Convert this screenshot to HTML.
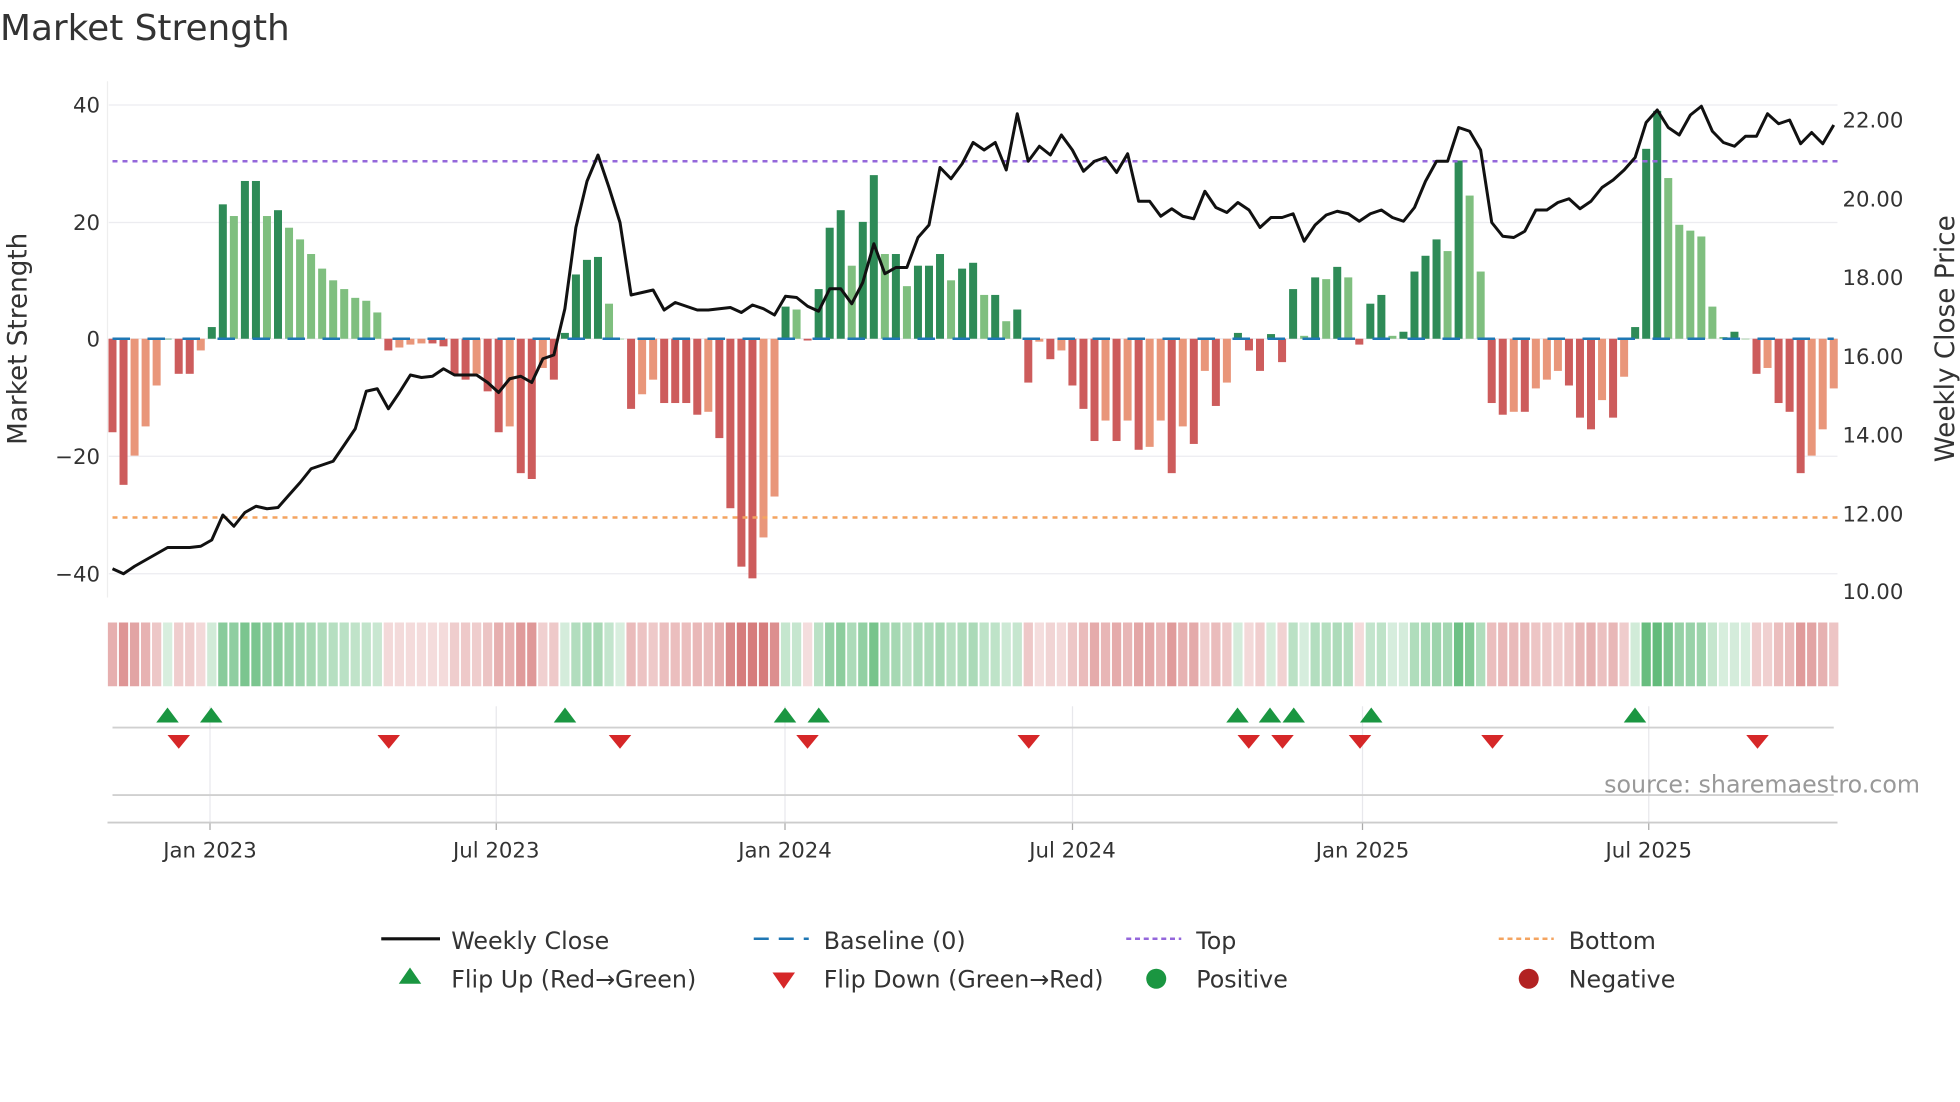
<!DOCTYPE html>
<html><head><meta charset="utf-8"><style>
html,body{margin:0;padding:0;background:#fff;width:1960px;height:1102px;overflow:hidden}
svg{display:block;font-family:"DejaVu Sans","Liberation Sans",sans-serif}
</style></head><body>
<svg id="s" width="1960" height="1102" viewBox="0 0 1568 881.6" xmlns="http://www.w3.org/2000/svg">
<text x="0" y="32" font-size="28.7" fill="#333">Market Strength</text>
<g id="grid"></g>
<g id="bars"></g>
<g id="strip"></g>
<g id="marks"></g>
<polyline id="price" fill="none" stroke="#111" stroke-width="2.4" stroke-linejoin="round"/>
<g font-size="17" fill="#333">
<text x="80" y="90" text-anchor="end">40</text>
<text x="80" y="184" text-anchor="end">20</text>
<text x="80" y="277" text-anchor="end">0</text>
<text x="80" y="371" text-anchor="end">−20</text>
<text x="80" y="465" text-anchor="end">−40</text>
<text x="1474" y="102">22.00</text>
<text x="1474" y="165">20.00</text>
<text x="1474" y="228">18.00</text>
<text x="1474" y="291">16.00</text>
<text x="1474" y="354">14.00</text>
<text x="1474" y="417">12.00</text>
<text x="1474" y="479">10.00</text>
<text x="168" y="686" text-anchor="middle">Jan 2023</text>
<text x="397" y="686" text-anchor="middle">Jul 2023</text>
<text x="628" y="686" text-anchor="middle">Jan 2024</text>
<text x="858" y="686" text-anchor="middle">Jul 2024</text>
<text x="1090" y="686" text-anchor="middle">Jan 2025</text>
<text x="1319" y="686" text-anchor="middle">Jul 2025</text>
</g>
<text transform="translate(21,271) rotate(-90)" text-anchor="middle" font-size="21" fill="#333">Market Strength</text>
<text transform="translate(1563,271) rotate(-90)" text-anchor="middle" font-size="21" fill="#333">Weekly Close Price</text>
<text x="1536" y="634" text-anchor="end" font-size="19" fill="#999">source: sharemaestro.com</text>
<g font-size="19" fill="#333">
<line x1="305" y1="751" x2="352" y2="751" stroke="#111" stroke-width="2.5"/>
<text x="361" y="759">Weekly Close</text>
<line x1="603" y1="751" x2="647" y2="751" stroke="#1f77b4" stroke-width="2" stroke-dasharray="12,8"/>
<text x="659" y="759">Baseline (0)</text>
<line x1="901" y1="751" x2="945" y2="751" stroke="#9467db" stroke-width="2" stroke-dasharray="4,3"/>
<text x="957" y="759">Top</text>
<line x1="1199" y1="751" x2="1243" y2="751" stroke="#f4a460" stroke-width="2" stroke-dasharray="4,3"/>
<text x="1255" y="759">Bottom</text>
<polygon points="328,774 319,787 337,787" fill="#1a9641"/>
<text x="361" y="790">Flip Up (Red→Green)</text>
<polygon points="627,791 618,778 636,778" fill="#d62728"/>
<text x="659" y="790">Flip Down (Green→Red)</text>
<circle cx="925" cy="783" r="8" fill="#1a9641"/>
<text x="957" y="790">Positive</text>
<circle cx="1223" cy="783" r="8" fill="#b22222"/>
<text x="1255" y="790">Negative</text>
</g>
</svg>
<script>
var NS="http://www.w3.org/2000/svg";
function el(p,t,a){var e=document.createElementNS(NS,t);for(var k in a)e.setAttribute(k,a[k]);document.getElementById(p).appendChild(e);return e;}
var v=[-16,-25,-20,-15,-8,0,-6,-6,-2,2,23,21,27,27,21,22,19,17,14.5,12,10,8.5,7,6.5,4.5,-2,-1.5,-1,-0.8,-0.8,-1.3,-6,-7,-6,-9,-16,-15,-23,-24,-5,-7,1,11,13.5,14,6,0,-12,-9.5,-7,-11,-11,-11,-13,-12.5,-17,-29,-39,-41,-34,-27,5.5,5,-0.3,8.5,19,22,12.5,20,28,14.5,14.5,9,12.5,12.5,14.5,10,12,13,7.5,7.5,3,5,-7.5,-0.5,-3.5,-2,-8,-12,-17.5,-14,-17.5,-14,-19,-18.5,-14,-23,-15,-18,-5.5,-11.5,-7.5,1,-2,-5.5,0.8,-4,8.5,0.5,10.5,10.2,12.3,10.5,-1,6,7.5,0.5,1.2,11.5,14.2,17,15,30.5,24.5,11.5,-11,-13,-12.5,-12.5,-8.5,-7,-5.5,-8,-13.5,-15.5,-10.5,-13.5,-6.5,2,32.5,39,27.5,19.5,18.5,17.5,5.5,0.3,1.2,0,-6,-5,-11,-12.5,-23,-20,-15.5,-8.5];
var p=[455,459,453,448,443,438,438,438,437,432,412,421,410,405,407,406,396,386,375,372,369,356,343,313,311,327,314,300,302,301,295,300,300,300,306,314,303,301,306,287,284,247,182,145,124,150,178,236,234,232,248,242,245,248,248,247,246,250,244,247,252,237,238,245,249,231,231,243,226,195,219,214,214,190,180,134,143,131,114,120,114,136,91,129,117,124,108,120,137,129,126,138,123,161,161,173,167,173,175,153,166,170,162,168,182,174,174,171,193,180,172,169,171,177,171,168,174,177,166,145,129,129,102,105,120,178,189,190,185,168,168,162,159,167,161,150,144,136,126,98,88,102,108,92,85,105,114,117,109,109,91,99,96,115,106,115,100];
var n=v.length,x0=90,dx=(1467-90)/(n-1),z=271,k=4.675;
[84,178,271,365,459].forEach(function(y){el("grid","line",{x1:87,x2:1470,y1:y,y2:y,stroke:"#ececf0","stroke-width":1});});
el("grid","line",{x1:86,x2:86,y1:65,y2:478,stroke:"#eee"});
[168,397,628,858,1090,1319].forEach(function(x){el("grid","line",{x1:x,x2:x,y1:565,y2:658,stroke:"#e8e8ec"});el("grid","line",{x1:x,x2:x,y1:658,y2:664,stroke:"#aaa"});});
el("grid","line",{x1:90,x2:1467,y1:582,y2:582,stroke:"#d0d0d0","stroke-width":1.5});
el("grid","line",{x1:90,x2:1467,y1:636,y2:636,stroke:"#d0d0d0","stroke-width":1.5});
el("grid","line",{x1:86,x2:1470,y1:658,y2:658,stroke:"#ccc","stroke-width":1.5});
for(var i=0;i<n;i++){var x=x0+i*dx,val=v[i],pr=i?v[i-1]:0,c;
 if(val>=0)c=(val>=pr)?"#2e8b57":"#7fbf7f";else c=(val<=pr)?"#cd5c5c":"#e9967a";
 var h=Math.abs(val)*k;el("bars","rect",{x:x-3.2,y:val>=0?z-h:z,width:6.4,height:Math.max(h,0.5),fill:c});
 var a=Math.min(1,0.25+Math.abs(val)/45),sc=val>=0?"rgba(60,170,90,"+(a*0.8)+")":"rgba(200,80,80,"+(a*0.75)+")";
 el("strip","rect",{x:x-3.7,y:498,width:7.4,height:51,fill:sc});
}
el("bars","line",{x1:90,x2:1467,y1:z,y2:z,stroke:"#1f77b4","stroke-width":2,"stroke-dasharray":"14,14"});
el("bars","line",{x1:90,x2:1470,y1:129,y2:129,stroke:"#9467db","stroke-width":2,"stroke-dasharray":"4,4"});
el("bars","line",{x1:90,x2:1470,y1:414,y2:414,stroke:"#f4a460","stroke-width":2,"stroke-dasharray":"4,4"});
var pts=[];for(var i=0;i<p.length;i++)pts.push((x0+i*dx).toFixed(1)+","+p[i]);
document.getElementById("price").setAttribute("points",pts.join(" "));
[134,169,452,628,655,990,1016,1035,1097,1308].forEach(function(x){el("marks","polygon",{points:x+",566 "+(x-9)+",578 "+(x+9)+",578",fill:"#1a9641"});});
[143,311,496,646,823,999,1026,1088,1194,1406].forEach(function(x){el("marks","polygon",{points:x+",599 "+(x-9)+",588 "+(x+9)+",588",fill:"#d62728"});});
</script>
</body></html>
